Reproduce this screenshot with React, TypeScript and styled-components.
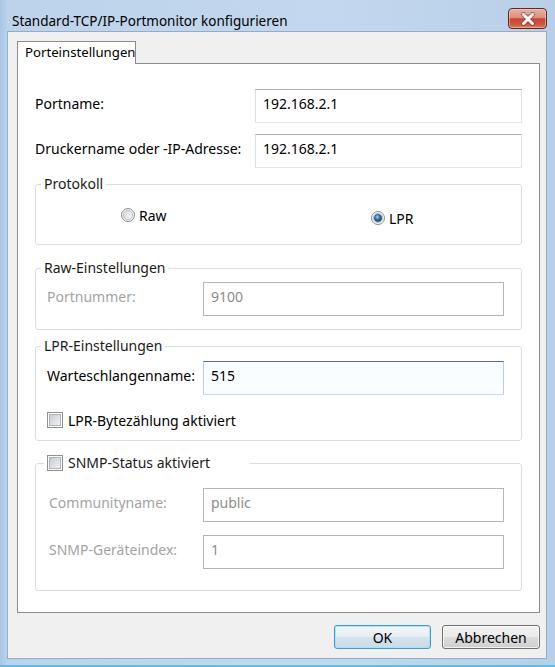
import styled, { createGlobalStyle } from "styled-components";

const GlobalStyle = createGlobalStyle`
  html, body {
    margin: 0;
    padding: 0;
    background: #b9d1ea;
  }
  body {
    font-family: "Noto Sans", "Open Sans", sans-serif;
    font-size: 14px;
    color: #000;
  }
  * {
    box-sizing: border-box;
  }
`;

const Window = styled.div`
  width: 555px;
  height: 667px;
  display: flex;
  flex-direction: column;
  background: linear-gradient(to right, #a9c5e4 0px, #bcd3eb 8px, #c3d8ee 60%, #b8cfe8 100%);
  box-shadow: inset 0 -2px 0 #55c0ea;
`;

const TitleBar = styled.div`
  height: 32px;
  display: flex;
  align-items: flex-start;
  justify-content: space-between;
  padding: 0 8px 0 12px;
`;

const Title = styled.div`
  margin-top: 11px;
  font-size: 13.5px;
  line-height: 20px;
  color: #000;
`;

const CloseButton = styled.div`
  margin-top: 8px;
  width: 39px;
  height: 21px;
  border: 1px solid #5b2a22;
  border-radius: 4px;
  display: flex;
  align-items: center;
  justify-content: center;
  background: linear-gradient(
    to bottom,
    #eab0a3 0%,
    #de8f7f 45%,
    #c9452f 52%,
    #d0553c 80%,
    #e07a5c 100%
  );
  box-shadow: inset 0 0 0 1px rgba(255, 210, 200, 0.5);
`;

const Client = styled.div`
  margin: 0 9px 0 8px;
  height: 626px;
  background: #f0f0f0;
  box-shadow: 0 0 0 1px #93adc9;
  display: flex;
  flex-direction: column;
`;

const TabStrip = styled.div`
  display: flex;
  padding: 9px 0 0 9px;
`;

const Tab = styled.div`
  position: relative;
  z-index: 1;
  width: 119px;
  height: 23px;
  margin-bottom: -1px;
  padding-left: 7px;
  border: 1px solid #898c95;
  border-bottom: none;
  background: #fff;
  line-height: 21px;
  font-size: 13.2px;
  white-space: nowrap;
`;

const Panel = styled.div`
  margin-left: 9px;
  width: 523px;
  height: 550px;
  border: 1px solid #898c95;
  background: #fff;
  padding: 25px 17px 0 17px;
  display: flex;
  flex-direction: column;
`;

const FieldRow = styled.div<{ $gap?: number }>`
  display: flex;
  align-items: flex-start;
  margin-top: ${(p) => p.$gap ?? 0}px;
`;

const Label = styled.div<{ $disabled?: boolean }>`
  flex: 1;
  padding-top: 4px;
  line-height: 22px;
  white-space: nowrap;
  color: ${(p) => (p.$disabled ? "#a3a3a3" : "#000")};
`;

const TextBox = styled.div<{ $width: number; $disabled?: boolean; $focus?: boolean }>`
  width: ${(p) => p.$width}px;
  height: 34px;
  padding: 3px 7px;
  line-height: 22px;
  border: 1px solid;
  border-color: ${(p) =>
    p.$disabled
      ? "#b2b6b9"
      : p.$focus
        ? "#5a6f82 #b5cfe7 #c5daed #b5cfe7"
        : "#abadb3 #e2e3ea #e3e9ef #dbdfe6"};
  background: ${(p) => (p.$focus ? "#f9fdff" : "#fff")};
  color: ${(p) => (p.$disabled ? "#8c8c8c" : "#000")};
`;

const Group = styled.fieldset<{ $gap: number; $top: number; $bottom: number }>`
  margin: ${(p) => p.$gap}px 0 0 0;
  padding: ${(p) => p.$top}px 0 ${(p) => p.$bottom}px 0;
  min-width: 0;
  border: 1px solid #d5dfe5;
  border-radius: 3px;
`;

const GroupBody = styled.div<{ $left: number }>`
  display: flex;
  flex-direction: column;
  padding: 0 17px 0 ${(p) => p.$left}px;
`;

const Legend = styled.legend<{ $indent?: number; $width?: number }>`
  margin-left: ${(p) => p.$indent ?? 5}px;
  padding: 0 3px;
  ${(p) => (p.$width ? `width: ${p.$width}px;` : "")}
  height: 20px;
  line-height: 20px;
  color: #1a1a1a;
  display: flex;
  align-items: center;
  gap: 5px;
`;

const RadioRow = styled.div`
  display: grid;
  grid-template-columns: 250px auto;
  padding-left: 85px;
  align-items: start;
`;

const Option = styled.div<{ $shift?: number }>`
  display: flex;
  align-items: center;
  gap: 4px;
  height: 20px;
  margin-top: ${(p) => p.$shift ?? 0}px;
`;

const CheckRow = styled.div<{ $gap?: number }>`
  display: flex;
  align-items: center;
  gap: 5px;
  height: 20px;
  margin-top: ${(p) => p.$gap ?? 0}px;
`;

const ButtonBar = styled.div`
  display: flex;
  justify-content: flex-end;
  gap: 11px;
  padding: 12px 6px 0 0;
`;

const Button = styled.div<{ $width: number; $default?: boolean }>`
  width: ${(p) => p.$width}px;
  height: 24px;
  border: 1px solid ${(p) => (p.$default ? "#3c9fd4" : "#707070")};
  border-radius: 3px;
  display: flex;
  align-items: center;
  justify-content: center;
  font-size: 14px;
  background: ${(p) =>
    p.$default
      ? "linear-gradient(to bottom, #f2f6f9 0%, #e6eef4 50%, #d4e2ec 51%, #cbdce9 100%)"
      : "linear-gradient(to bottom, #f2f2f2 0%, #ebebeb 50%, #dddddd 51%, #cfcfcf 100%)"};
  box-shadow: inset 0 0 0 1px ${(p) => (p.$default ? "rgba(160, 225, 250, 0.8)" : "rgba(255, 255, 255, 0.7)")};
`;

const Radio = ({ checked }: { checked?: boolean }) => (
  <svg width="14" height="14" viewBox="0 0 14 14">
    <defs>
      <linearGradient id={checked ? "rOn" : "rOff"} x1="0" y1="0" x2="1" y2="1">
        <stop offset="0" stopColor="#d6d6d6" />
        <stop offset="1" stopColor="#fafafa" />
      </linearGradient>
      <radialGradient id="rDot" cx="0.4" cy="0.35" r="0.7">
        <stop offset="0" stopColor="#9bd8fb" />
        <stop offset="0.45" stopColor="#2a80c0" />
        <stop offset="1" stopColor="#0c3d6e" />
      </radialGradient>
    </defs>
    <circle cx="7" cy="7" r="6.5" fill="#f4f4f4" stroke="#8a8c8f" />
    <circle cx="7" cy="7" r="4.6" fill={`url(#${checked ? "rOn" : "rOff"})`} stroke="#b0b3b6" strokeWidth="0.8" />
    {checked && <circle cx="7" cy="7" r="3.6" fill="url(#rDot)" stroke="#153d62" strokeWidth="0.6" />}
  </svg>
);

const CheckBox = () => (
  <svg width="16" height="16" viewBox="0 0 16 16">
    <defs>
      <linearGradient id="cbFill" x1="0" y1="0" x2="1" y2="1">
        <stop offset="0" stopColor="#c6cad0" />
        <stop offset="1" stopColor="#f4f4f4" />
      </linearGradient>
    </defs>
    <rect x="0.5" y="0.5" width="15" height="15" fill="#fff" stroke="#8f8f8f" />
    <rect x="2.5" y="2.5" width="11" height="11" fill="url(#cbFill)" stroke="#aeb3b9" />
  </svg>
);

const CloseGlyph = () => (
  <svg width="16" height="14" viewBox="0 0 16 14">
    <path
      d="M3.5 2.5 L12.5 11.5 M12.5 2.5 L3.5 11.5"
      stroke="#6a2a20"
      strokeWidth="5"
      strokeLinecap="round"
      fill="none"
      opacity="0.45"
    />
    <path d="M3.5 2.5 L12.5 11.5 M12.5 2.5 L3.5 11.5" stroke="#fff" strokeWidth="3" strokeLinecap="round" />
  </svg>
);

const App = () => {
  return (
    <Window>
      <GlobalStyle />
      <TitleBar>
        <Title>Standard-TCP/IP-Portmonitor konfigurieren</Title>
        <CloseButton>
          <CloseGlyph />
        </CloseButton>
      </TitleBar>
      <Client>
        <TabStrip>
          <Tab>Porteinstellungen</Tab>
        </TabStrip>
        <Panel>
          <FieldRow>
            <Label>Portname:</Label>
            <TextBox $width={267}>192.168.2.1</TextBox>
          </FieldRow>
          <FieldRow $gap={11}>
            <Label>Druckername oder -IP-Adresse:</Label>
            <TextBox $width={267}>192.168.2.1</TextBox>
          </FieldRow>

          <Group $gap={6} $top={11} $bottom={16}>
            <Legend>Protokoll</Legend>
            <RadioRow>
              <Option>
                <Radio />
                Raw
              </Option>
              <Option $shift={3}>
                <Radio checked />
                LPR
              </Option>
            </RadioRow>
          </Group>

          <Group $gap={13} $top={4} $bottom={13}>
            <Legend>Raw-Einstellungen</Legend>
            <GroupBody $left={11}>
              <FieldRow>
                <Label $disabled>Portnummer:</Label>
                <TextBox $width={301} $disabled>
                  9100
                </TextBox>
              </FieldRow>
            </GroupBody>
          </Group>

          <Group $gap={6} $top={5} $bottom={10}>
            <Legend>LPR-Einstellungen</Legend>
            <GroupBody $left={11}>
              <FieldRow>
                <Label>Warteschlangenname:</Label>
                <TextBox $width={301} $focus>
                  515
                </TextBox>
              </FieldRow>
              <CheckRow $gap={15}>
                <CheckBox />
                LPR-Bytezählung aktiviert
              </CheckRow>
            </GroupBody>
          </Group>

          <Group $gap={12} $top={15} $bottom={21}>
            <Legend $indent={8} $width={206}>
              <CheckBox />
              SNMP-Status aktiviert
            </Legend>
            <GroupBody $left={13}>
              <FieldRow>
                <Label $disabled>Communityname:</Label>
                <TextBox $width={301} $disabled>
                  public
                </TextBox>
              </FieldRow>
              <FieldRow $gap={13}>
                <Label $disabled>SNMP-Geräteindex:</Label>
                <TextBox $width={301} $disabled>
                  1
                </TextBox>
              </FieldRow>
            </GroupBody>
          </Group>
        </Panel>
        <ButtonBar>
          <Button $width={97} $default>
            OK
          </Button>
          <Button $width={98}>Abbrechen</Button>
        </ButtonBar>
      </Client>
    </Window>
  );
};

export default App;
